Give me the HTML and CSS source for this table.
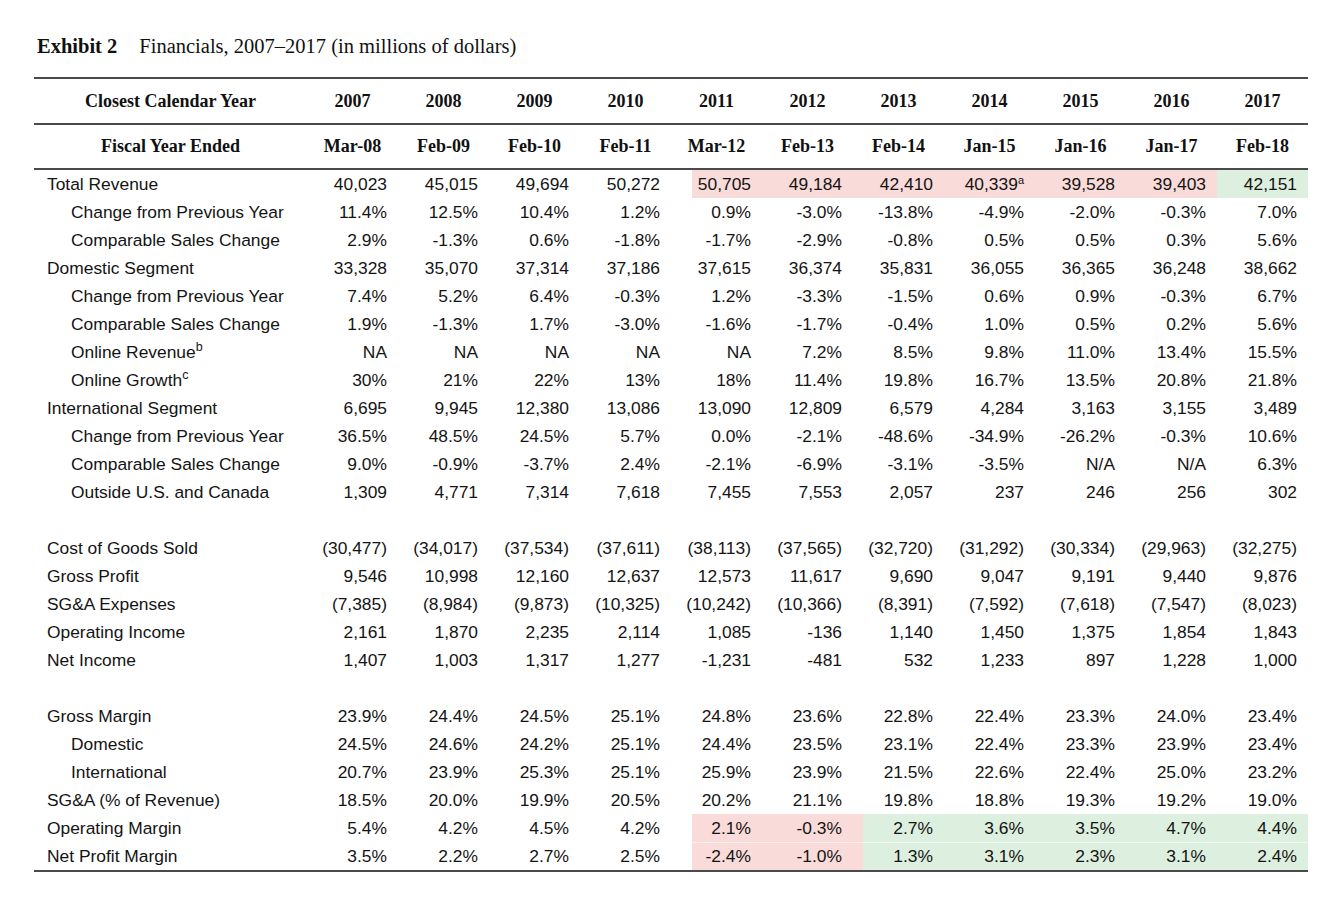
FILE: index.html
```html
<!DOCTYPE html>
<html lang="en">
<head>
<meta charset="utf-8">
<title>Exhibit 2 Financials</title>
<link rel="stylesheet" href="styles.css">
</head>
<body>
<div class="page">
  <h1 class="title"><span class="ex">Exhibit 2</span>Financials, 2007–2017 (in millions of dollars)</h1>
  <table class="fin">
    <colgroup>
      <col class="c-lbl">
      <col class="c-num"><col class="c-num"><col class="c-num"><col class="c-num"><col class="c-num"><col class="c-num"><col class="c-num"><col class="c-num"><col class="c-num"><col class="c-num"><col class="c-num">
    </colgroup>
    <thead>
      <tr class="h1">
        <th>Closest Calendar Year</th>
        <th>2007</th><th>2008</th><th>2009</th><th>2010</th><th>2011</th><th>2012</th><th>2013</th><th>2014</th><th>2015</th><th>2016</th><th>2017</th>
      </tr>
      <tr class="h2">
        <th>Fiscal Year Ended</th>
        <th>Mar-08</th><th>Feb-09</th><th>Feb-10</th><th>Feb-11</th><th>Mar-12</th><th>Feb-13</th><th>Feb-14</th><th>Jan-15</th><th>Jan-16</th><th>Jan-17</th><th>Feb-18</th>
      </tr>
    </thead>
    <tbody>
      <tr><td class="lbl">Total Revenue</td><td>40,023</td><td>45,015</td><td>49,694</td><td>50,272</td><td class="pk1">50,705</td><td class="pk">49,184</td><td class="pk">42,410</td><td class="pk">40,339<sup class="sm">a</sup></td><td class="pk">39,528</td><td class="pk">39,403</td><td class="gn">42,151</td></tr>
      <tr><td class="lbl ind">Change from Previous Year</td><td>11.4%</td><td>12.5%</td><td>10.4%</td><td>1.2%</td><td>0.9%</td><td>-3.0%</td><td>-13.8%</td><td>-4.9%</td><td>-2.0%</td><td>-0.3%</td><td>7.0%</td></tr>
      <tr><td class="lbl ind">Comparable Sales Change</td><td>2.9%</td><td>-1.3%</td><td>0.6%</td><td>-1.8%</td><td>-1.7%</td><td>-2.9%</td><td>-0.8%</td><td>0.5%</td><td>0.5%</td><td>0.3%</td><td>5.6%</td></tr>
      <tr><td class="lbl">Domestic Segment</td><td>33,328</td><td>35,070</td><td>37,314</td><td>37,186</td><td>37,615</td><td>36,374</td><td>35,831</td><td>36,055</td><td>36,365</td><td>36,248</td><td>38,662</td></tr>
      <tr><td class="lbl ind">Change from Previous Year</td><td>7.4%</td><td>5.2%</td><td>6.4%</td><td>-0.3%</td><td>1.2%</td><td>-3.3%</td><td>-1.5%</td><td>0.6%</td><td>0.9%</td><td>-0.3%</td><td>6.7%</td></tr>
      <tr><td class="lbl ind">Comparable Sales Change</td><td>1.9%</td><td>-1.3%</td><td>1.7%</td><td>-3.0%</td><td>-1.6%</td><td>-1.7%</td><td>-0.4%</td><td>1.0%</td><td>0.5%</td><td>0.2%</td><td>5.6%</td></tr>
      <tr><td class="lbl ind">Online Revenue<sup>b</sup></td><td>NA</td><td>NA</td><td>NA</td><td>NA</td><td>NA</td><td>7.2%</td><td>8.5%</td><td>9.8%</td><td>11.0%</td><td>13.4%</td><td>15.5%</td></tr>
      <tr><td class="lbl ind">Online Growth<sup>c</sup></td><td>30%</td><td>21%</td><td>22%</td><td>13%</td><td>18%</td><td>11.4%</td><td>19.8%</td><td>16.7%</td><td>13.5%</td><td>20.8%</td><td>21.8%</td></tr>
      <tr><td class="lbl">International Segment</td><td>6,695</td><td>9,945</td><td>12,380</td><td>13,086</td><td>13,090</td><td>12,809</td><td>6,579</td><td>4,284</td><td>3,163</td><td>3,155</td><td>3,489</td></tr>
      <tr><td class="lbl ind">Change from Previous Year</td><td>36.5%</td><td>48.5%</td><td>24.5%</td><td>5.7%</td><td>0.0%</td><td>-2.1%</td><td>-48.6%</td><td>-34.9%</td><td>-26.2%</td><td>-0.3%</td><td>10.6%</td></tr>
      <tr><td class="lbl ind">Comparable Sales Change</td><td>9.0%</td><td>-0.9%</td><td>-3.7%</td><td>2.4%</td><td>-2.1%</td><td>-6.9%</td><td>-3.1%</td><td>-3.5%</td><td>N/A</td><td>N/A</td><td>6.3%</td></tr>
      <tr><td class="lbl ind">Outside U.S. and Canada</td><td>1,309</td><td>4,771</td><td>7,314</td><td>7,618</td><td>7,455</td><td>7,553</td><td>2,057</td><td>237</td><td>246</td><td>256</td><td>302</td></tr>
      <tr class="blank"><td colspan="12"></td></tr>
      <tr><td class="lbl">Cost of Goods Sold</td><td>(30,477)</td><td>(34,017)</td><td>(37,534)</td><td>(37,611)</td><td>(38,113)</td><td>(37,565)</td><td>(32,720)</td><td>(31,292)</td><td>(30,334)</td><td>(29,963)</td><td>(32,275)</td></tr>
      <tr><td class="lbl">Gross Profit</td><td>9,546</td><td>10,998</td><td>12,160</td><td>12,637</td><td>12,573</td><td>11,617</td><td>9,690</td><td>9,047</td><td>9,191</td><td>9,440</td><td>9,876</td></tr>
      <tr><td class="lbl">SG&amp;A Expenses</td><td>(7,385)</td><td>(8,984)</td><td>(9,873)</td><td>(10,325)</td><td>(10,242)</td><td>(10,366)</td><td>(8,391)</td><td>(7,592)</td><td>(7,618)</td><td>(7,547)</td><td>(8,023)</td></tr>
      <tr><td class="lbl">Operating Income</td><td>2,161</td><td>1,870</td><td>2,235</td><td>2,114</td><td>1,085</td><td>-136</td><td>1,140</td><td>1,450</td><td>1,375</td><td>1,854</td><td>1,843</td></tr>
      <tr><td class="lbl">Net Income</td><td>1,407</td><td>1,003</td><td>1,317</td><td>1,277</td><td>-1,231</td><td>-481</td><td>532</td><td>1,233</td><td>897</td><td>1,228</td><td>1,000</td></tr>
      <tr class="blank"><td colspan="12"></td></tr>
      <tr><td class="lbl">Gross Margin</td><td>23.9%</td><td>24.4%</td><td>24.5%</td><td>25.1%</td><td>24.8%</td><td>23.6%</td><td>22.8%</td><td>22.4%</td><td>23.3%</td><td>24.0%</td><td>23.4%</td></tr>
      <tr><td class="lbl ind">Domestic</td><td>24.5%</td><td>24.6%</td><td>24.2%</td><td>25.1%</td><td>24.4%</td><td>23.5%</td><td>23.1%</td><td>22.4%</td><td>23.3%</td><td>23.9%</td><td>23.4%</td></tr>
      <tr><td class="lbl ind">International</td><td>20.7%</td><td>23.9%</td><td>25.3%</td><td>25.1%</td><td>25.9%</td><td>23.9%</td><td>21.5%</td><td>22.6%</td><td>22.4%</td><td>25.0%</td><td>23.2%</td></tr>
      <tr><td class="lbl">SG&amp;A (% of Revenue)</td><td>18.5%</td><td>20.0%</td><td>19.9%</td><td>20.5%</td><td>20.2%</td><td>21.1%</td><td>19.8%</td><td>18.8%</td><td>19.3%</td><td>19.2%</td><td>19.0%</td></tr>
      <tr><td class="lbl">Operating Margin</td><td>5.4%</td><td>4.2%</td><td>4.5%</td><td>4.2%</td><td class="pk1">2.1%</td><td class="pk">-0.3%</td><td class="gn1">2.7%</td><td class="gn">3.6%</td><td class="gn">3.5%</td><td class="gn">4.7%</td><td class="gn">4.4%</td></tr>
      <tr class="split"><td class="lbl">Net Profit Margin</td><td>3.5%</td><td>2.2%</td><td>2.7%</td><td>2.5%</td><td class="pk1">-2.4%</td><td class="pk">-1.0%</td><td class="gn1">1.3%</td><td class="gn">3.1%</td><td class="gn">2.3%</td><td class="gn">3.1%</td><td class="gn">2.4%</td></tr>
    </tbody>
  </table>
</div>
</body>
</html>
```

FILE: styles.css
```css
html, body {
  margin: 0;
  padding: 0;
  background: #ffffff;
}

body {
  color: #141414;
  font-family: "Liberation Sans", Arial, sans-serif;
}

.page {
  padding: 34px 0 0 34px;
}

.title {
  margin: 0 0 19px 3px;
  font-family: "Liberation Serif", "Times New Roman", serif;
  font-size: 20.5px;
  line-height: 24px;
  font-weight: normal;
  color: #111;
}

.title .ex {
  font-weight: bold;
  margin-right: 22px;
}

.fin {
  width: 1274px;
  table-layout: fixed;
  border-collapse: collapse;
  border-top: 2px solid #4a4a4a;
  border-bottom: 2px solid #4a4a4a;
}

.c-lbl {
  width: 273px;
}

.c-num {
  width: 91px;
}

.fin th {
  padding: 0;
  font-family: "Liberation Serif", "Times New Roman", serif;
  font-weight: bold;
  font-size: 18px;
  text-align: center;
  color: #111;
  border-bottom: 2px solid #4a4a4a;
}

.fin .h1 th {
  height: 44px;
}

.fin .h2 th {
  height: 43px;
}

.fin td {
  height: 28px;
  padding: 0 11px 0 0;
  font-size: 17.4px;
  line-height: 28px;
  text-align: right;
  white-space: nowrap;
}

.fin td.lbl {
  text-align: left;
  padding-left: 13px;
}

.fin td.lbl.ind {
  padding-left: 37px;
}

.fin sup {
  font-size: 12.5px;
  line-height: 0;
  vertical-align: 7px;
}

.fin sup.sm {
  font-size: 11px;
  vertical-align: 6px;
}

.fin .blank td {
  height: 28px;
}

.pk {
  background: #f9dbda;
}

.pk1 {
  background: linear-gradient(to right, #ffffff 21px, #f9dbda 21px);
}

.gn {
  background: #ddefde;
}

.gn1 {
  background: linear-gradient(to right, #f9dbda 10px, #ddefde 10px);
}

.split .pk,
.split .pk1,
.split .gn,
.split .gn1 {
  box-shadow: inset 0 1px 0 rgba(255, 255, 255, 0.55);
}
```
